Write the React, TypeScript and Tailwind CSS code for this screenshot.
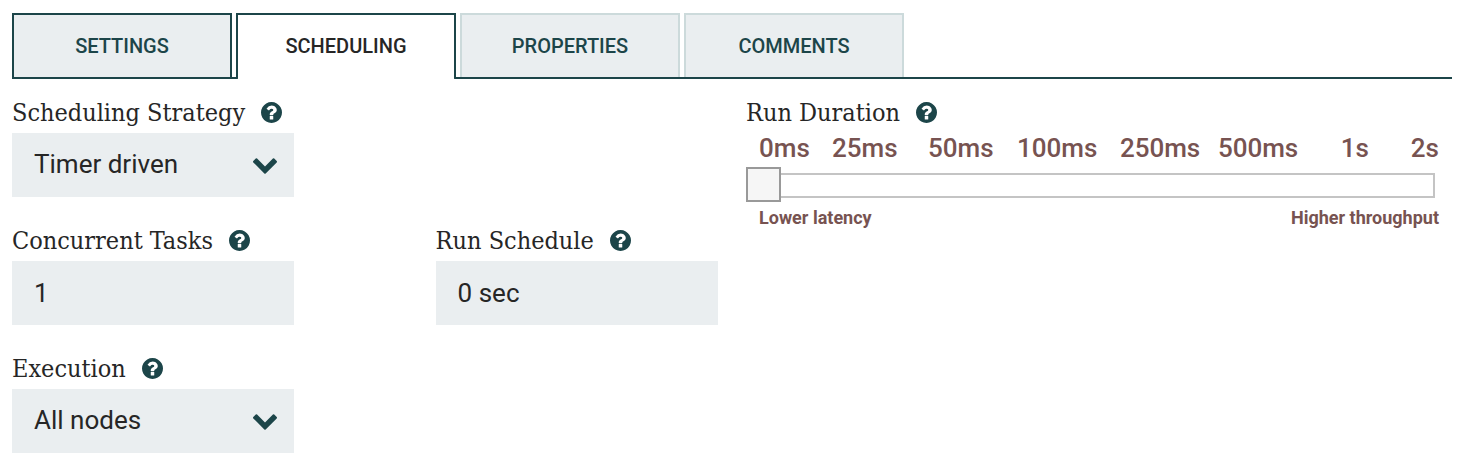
import { ReactNode, useState } from "react";
import clsx from "clsx";

const tabs = ["Settings", "Scheduling", "Properties", "Comments"];

const durations = ["0ms", "25ms", "50ms", "100ms", "250ms", "500ms", "1s", "2s"];

function HelpIcon() {
  return (
    <svg viewBox="128 128 1536 1536" className="h-[21px] w-[21px] fill-[#1c4549]" aria-hidden="true">
      <path d="M1024 1376v-192q0-14-9-23t-23-9h-192q-14 0-23 9t-9 23v192q0 14 9 23t23 9h192q14 0 23-9t9-23zM1280 704q0-88-55.5-163t-138.5-116-170-41q-243 0-371 213-15 24 8 42l132 100q7 6 19 6 16 0 25-12 53-68 86-92 34-24 86-24 48 0 85.5 26t37.5 59q0 38-20 61t-68 45q-63 28-115.5 86.5t-52.5 125.5v36q0 14 9 23t23 9h192q14 0 23-9t9-23q0-19 21.5-49.5t54.5-49.5q32-18 49-28.5t46-35 44.5-48 28-60.5 12.5-81zM1664 896q0 209-103 385.5t-279.5 279.5-385.5 103-385.5-103-279.5-279.5-103-385.5 103-385.5 279.5-279.5 385.5-103 385.5 103 279.5 279.5 103 385.5z" />
    </svg>
  );
}

function ChevronIcon() {
  return (
    <svg
      viewBox="90 533 1612 1035"
      className="pointer-events-none absolute top-[25px] right-[17px] h-4 w-6 fill-[#1c4549]"
      aria-hidden="true"
    >
      <path d="M1683 808l-742 741q-19 19-45 19t-45-19l-742-741q-19-19-19-45.5t19-45.5l166-165q19-19 45-19t45 19l531 531 531-531q19-19 45-19t45 19l166 165q19 19 19 45.5t-19 45.5z" />
    </svg>
  );
}

function Field({ id, label, children }: { id: string; label: string; children: ReactNode }) {
  return (
    <div className="w-2/5">
      <FieldLabel id={id} label={label} />
      {children}
    </div>
  );
}

function FieldLabel({ id, label }: { id: string; label: string }) {
  return (
    <div className="flex h-9 items-center gap-4 pb-[5px]">
      <label
        htmlFor={id}
        className="font-['Roboto_Slab','DejaVu_Serif_Condensed','DejaVu_Serif',serif] text-[25px] leading-[31px] whitespace-nowrap"
      >
        {label}
      </label>
      <HelpIcon />
    </div>
  );
}

function SelectBox({ id, options }: { id: string; options: string[] }) {
  return (
    <div className="relative">
      <select id={id} className="h-16 w-full appearance-none bg-[#eaeef0] px-[22px] pb-0.5 text-[26px] outline-none">
        {options.map((option) => (
          <option key={option}>{option}</option>
        ))}
      </select>
      <ChevronIcon />
    </div>
  );
}

function TextBox({ id, value }: { id: string; value: string }) {
  return (
    <input
      id={id}
      type="text"
      defaultValue={value}
      className="block h-16 w-full bg-[#eaeef0] px-[22px] text-[26px] outline-none"
    />
  );
}

export default function App() {
  const [activeTab, setActiveTab] = useState("Scheduling");
  const [duration, setDuration] = useState(0);

  return (
    <div className="bg-white pt-[13px] pr-[22px] pb-6 pl-3 font-[Roboto,sans-serif] text-[#262626]">
      <div role="tablist" className="flex gap-1 border-b-2 border-[#1c4549]">
        {tabs.map((tab, index) => (
          <button
            key={tab}
            type="button"
            role="tab"
            aria-selected={tab === activeTab}
            onClick={() => setActiveTab(tab)}
            className={clsx(
              "w-[220px] border-2 border-b-0 text-xl font-medium uppercase",
              tab === activeTab
                ? "-mb-0.5 h-[66px] rounded-b-xs border-[#1c4549] bg-white pb-0.5"
                : "h-16 bg-[#eaeef0] text-[#1c4549]",
              tab !== activeTab && (index === 0 ? "border-[#1c4549]" : "border-[#ccdadb]")
            )}
          >
            {tab}
          </button>
        ))}
      </div>

      <div className="mt-[18px] grid grid-cols-2 gap-7">
        <div className="space-y-7">
          <Field id="strategy" label="Scheduling Strategy">
            <SelectBox id="strategy" options={["Timer driven"]} />
          </Field>
          <div className="flex justify-between">
            <Field id="tasks" label="Concurrent Tasks">
              <TextBox id="tasks" value="1" />
            </Field>
            <Field id="schedule" label="Run Schedule">
              <TextBox id="schedule" value="0 sec" />
            </Field>
          </div>
          <Field id="execution" label="Execution">
            <SelectBox id="execution" options={["All nodes"]} />
          </Field>
        </div>

        <div>
          <FieldLabel id="duration" label="Run Duration" />
          <div className="grid grid-cols-[73fr_96fr_89fr_103fr_98fr_123fr_70fr_28fr] px-[13px] text-[26px] leading-[30px] font-medium text-[#775351]">
            {durations.map((label) => (
              <span key={label}>{label}</span>
            ))}
          </div>
          <div className="mt-[5px] pr-[17px]">
            <input
              id="duration"
              type="range"
              min={0}
              max={durations.length - 1}
              value={duration}
              onChange={(e) => setDuration(Number(e.target.value))}
              className="block h-[35px] w-full appearance-none bg-transparent outline-none [&::-webkit-slider-runnable-track]:h-[25px] [&::-webkit-slider-runnable-track]:border-2 [&::-webkit-slider-runnable-track]:border-[#c4c4c4] [&::-webkit-slider-thumb]:-mt-2 [&::-webkit-slider-thumb]:-ml-0.5 [&::-webkit-slider-thumb]:size-[35px] [&::-webkit-slider-thumb]:appearance-none [&::-webkit-slider-thumb]:border-2 [&::-webkit-slider-thumb]:border-[#999999] [&::-webkit-slider-thumb]:bg-[#f6f6f6]"
            />
          </div>
          <div className="mt-[3px] flex justify-between px-[13px] text-lg leading-6 font-bold text-[#775351]">
            <span>Lower latency</span>
            <span>Higher throughput</span>
          </div>
        </div>
      </div>
    </div>
  );
}
